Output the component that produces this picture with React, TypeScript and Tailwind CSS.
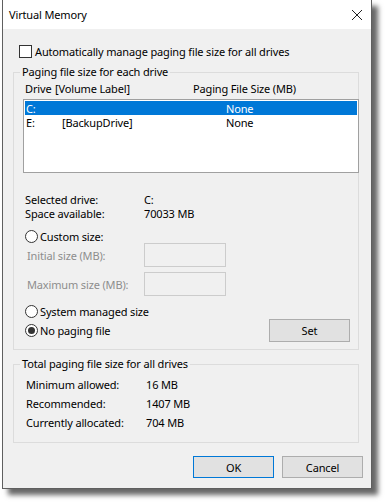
import React from "react";

function Radio({ checked }: { checked?: boolean }) {
  return (
    <span className="w-[13px] h-[13px] rounded-full border border-[#333333] bg-white flex items-center justify-center shrink-0">
      {checked && <span className="w-[7px] h-[7px] rounded-full bg-[#333333]" />}
    </span>
  );
}

function Button({ label, focused }: { label: string; focused?: boolean }) {
  return (
    <div
      className={
        "w-[81px] h-[22px] flex items-center justify-center bg-[#e1e1e1] border " +
        (focused ? "border-[#0078d7]" : "border-[#adadad]")
      }
    >
      {label}
    </div>
  );
}

export default function App() {
  return (
    <div className="w-[386px] h-[504px] bg-white font-['Noto_Sans',sans-serif] text-[11px] tracking-[-0.15px] leading-none text-black">
      <div className="ml-[2px] w-[370px] h-[489px] border-l border-r border-b border-[#5f5f5f] bg-[#f0f0f0] shadow-[6px_6px_5px_rgba(0,0,0,0.6)] flex flex-col">
        {/* title bar */}
        <div className="h-[29px] bg-white flex items-center justify-between pl-[6px] pr-[8px]">
          <span>Virtual Memory</span>
          <svg width="12" height="12" viewBox="0 0 12 12" className="text-[#222]">
            <path d="M1 1L11 11M11 1L1 11" stroke="currentColor" strokeWidth="1" fill="none" />
          </svg>
        </div>

        <div className="pl-[16px] mt-[15px] h-[14px] flex items-center gap-[3px]">
          <span className="w-[13px] h-[13px] border border-[#333333] bg-white" />
          <span>Automatically manage paging file size for all drives</span>
        </div>

        {/* group 1 */}
        <div className="relative ml-[10px] mt-[14px] w-[346px] h-[278px] border border-[#dcdcdc]">
          <span className="absolute left-[6px] -top-[7px] px-[2px] bg-[#f0f0f0]">Paging file size for each drive</span>
          <div className="mt-[8px] pl-[11px] h-[14px] flex items-center">
            <span className="w-[30px]">Drive</span>
            <span className="w-[138px]">[Volume Label]</span>
            <span>Paging File Size (MB)</span>
          </div>
          <div className="ml-[9px] mt-[4px] w-[336px] h-[74px] border border-[#a0a0a0] bg-white p-[1px]">
            <div className="h-[14px] bg-[#0078d7] text-white flex items-center pl-[1px]">
              <span className="w-[36px]">C:</span>
              <span className="w-[164px]"></span>
              <span>None</span>
            </div>
            <div className="h-[14px] flex items-center pl-[1px]">
              <span className="w-[36px]">E:</span>
              <span className="w-[164px]">[BackupDrive]</span>
              <span>None</span>
            </div>
          </div>

          <div className="mt-[19px] pl-[11px] h-[14px] flex items-center">
            <span className="w-[119px]">Selected drive:</span>
            <span>C:</span>
          </div>
          <div className="pl-[11px] h-[14px] flex items-center">
            <span className="w-[119px]">Space available:</span>
            <span>70033 MB</span>
          </div>

          <div className="mt-[10px] pl-[11px] h-[13px] flex items-center gap-[2px]">
            <Radio />
            <span>Custom size:</span>
          </div>
          <div className="pl-[13px] h-[24px] flex items-center text-[#8d8d8d]">
            <span className="w-[117px]">Initial size (MB):</span>
            <span className="w-[82px] h-[24px] border border-[#cccccc]" />
          </div>
          <div className="mt-[5px] pl-[13px] h-[24px] flex items-center text-[#8d8d8d]">
            <span className="w-[117px]">Maximum size (MB):</span>
            <span className="w-[82px] h-[24px] border border-[#cccccc]" />
          </div>

          <div className="mt-[8px] pl-[11px] h-[14px] flex items-center gap-[2px]">
            <Radio />
            <span>System managed size</span>
          </div>
          <div className="mt-[1px] pl-[11px] pr-[8px] h-[23px] flex items-center justify-between">
            <div className="flex items-center gap-[2px]">
              <Radio checked />
              <span>No paging file</span>
            </div>
            <div className="w-[81px] h-[23px] flex items-center justify-center bg-[#e1e1e1] border border-[#adadad]">Set</div>
          </div>
        </div>

        {/* group 2 */}
        <div className="relative ml-[10px] mt-[14px] w-[346px] h-[79px] border border-[#dcdcdc]">
          <span className="absolute left-[6px] -top-[7px] px-[2px] bg-[#f0f0f0]">Total paging file size for all drives</span>
          <div className="mt-[12px] pl-[12px] flex flex-col gap-[5px]">
            <div className="h-[14px] flex items-center">
              <span className="w-[120px]">Minimum allowed:</span>
              <span>16 MB</span>
            </div>
            <div className="h-[14px] flex items-center">
              <span className="w-[120px]">Recommended:</span>
              <span>1407 MB</span>
            </div>
            <div className="h-[14px] flex items-center">
              <span className="w-[120px]">Currently allocated:</span>
              <span>704 MB</span>
            </div>
          </div>
        </div>

        <div className="mt-[13px] pr-[8px] flex justify-end gap-[8px]">
          <Button label="OK" focused />
          <Button label="Cancel" />
        </div>
      </div>
    </div>
  );
}
